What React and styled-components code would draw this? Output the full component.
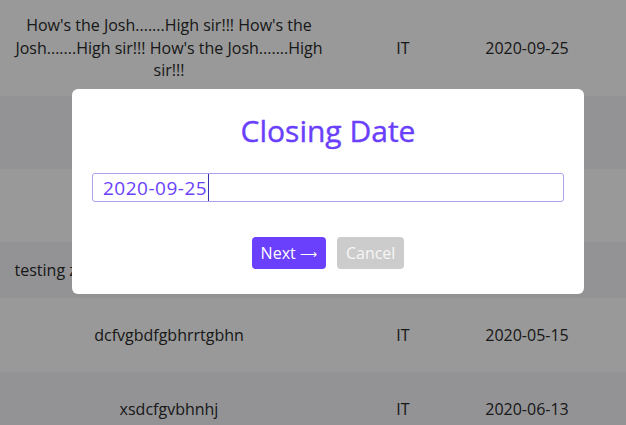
import React from "react";
import styled, { createGlobalStyle } from "styled-components";

const GlobalStyle = createGlobalStyle`
  html, body {
    margin: 0;
    padding: 0;
    background: #ffffff;
    font-family: "Open Sans", "Liberation Sans", sans-serif;
  }
`;

const Table = styled.div`
  display: flex;
  flex-direction: column;
  width: 626px;
`;

const Row = styled.div`
  display: grid;
  grid-template-columns: 338px 130px 118px 1fr;
  align-items: center;
  height: ${(p) => p.h}px;
  background: ${(p) => (p.striped ? "#f5f5fb" : "#ffffff")};
`;

const Cell = styled.div`
  padding: 0 10px;
  text-align: center;
  font-size: 16px;
  line-height: 22.5px;
  color: #2a2a2a;
  white-space: ${(p) => (p.nowrap ? "nowrap" : "normal")};
  overflow: hidden;
`;

const Overlay = styled.div`
  position: fixed;
  inset: 0;
  background: rgba(0, 0, 0, 0.4);
  display: flex;
  align-items: flex-start;
  padding: 89px 0 0 72px;
`;

const Modal = styled.div`
  width: 512px;
  box-sizing: border-box;
  background: #ffffff;
  border-radius: 6px;
  padding: 21px 20px 25px;
  display: flex;
  flex-direction: column;
`;

const Title = styled.h2`
  margin: 0;
  text-align: center;
  font-size: 30px;
  line-height: 42px;
  font-weight: 400;
  color: #6a3ffb;
  -webkit-text-stroke: 0.4px #6a3ffb;
`;

const Field = styled.div`
  margin-top: 21px;
  height: 29px;
  box-sizing: border-box;
  border: 1px solid #aaa0ee;
  border-radius: 3px;
  padding: 0 10px;
  display: flex;
  align-items: center;
  font-size: 19px;
  letter-spacing: 0.5px;
  color: #6a3ffb;
`;

const Caret = styled.span`
  display: inline-block;
  width: 1px;
  height: 27px;
  margin-left: 1px;
  background: #3a2fb0;
`;

const Actions = styled.div`
  margin-top: 35px;
  display: flex;
  justify-content: center;
  gap: 11px;
`;

const Button = styled.button`
  height: 32px;
  padding: 0 9px;
  border: none;
  border-radius: 4px;
  display: flex;
  align-items: center;
  gap: 4px;
  font-family: "Open Sans", "Liberation Sans", sans-serif;
  font-size: 16px;
  color: ${(p) => (p.muted ? "#f6f6f6" : "#ffffff")};
  background: ${(p) => (p.muted ? "#cccccc" : "#6a40fd")};
  cursor: pointer;
`;

const Arrow = styled.span`
  font-family: "DejaVu Sans", sans-serif;
  font-size: 12px;
  line-height: 1;
  padding-top: 2px;
`;

const rows = [
  {
    h: 96,
    name: "How's the Josh.......High sir!!! How's the Josh.......High sir!!! How's the Josh.......High sir!!!",
    dept: "IT",
    date: "2020-09-25",
  },
  { h: 73, striped: true },
  { h: 73 },
  { h: 56, striped: true, name: "testing zxcvbnm qwerty asdfghjkl zxcvbnr", nowrap: true },
  { h: 74, name: "dcfvgbdfgbhrrtgbhn", dept: "IT", date: "2020-05-15" },
  { h: 74, striped: true, name: "xsdcfgvbhnhj", dept: "IT", date: "2020-06-13" },
];

export default function App() {
  return (
    <>
      <GlobalStyle />
      <Table>
        {rows.map((r, i) => (
          <Row key={i} h={r.h} striped={r.striped}>
            <Cell nowrap={r.nowrap}>{r.name}</Cell>
            <Cell>{r.dept}</Cell>
            <Cell>{r.date}</Cell>
            <Cell />
          </Row>
        ))}
      </Table>
      <Overlay>
        <Modal>
          <Title>Closing Date</Title>
          <Field>
            2020-09-25
            <Caret />
          </Field>
          <Actions>
            <Button>
              Next<Arrow>⟶</Arrow>
            </Button>
            <Button muted>Cancel</Button>
          </Actions>
        </Modal>
      </Overlay>
    </>
  );
}
